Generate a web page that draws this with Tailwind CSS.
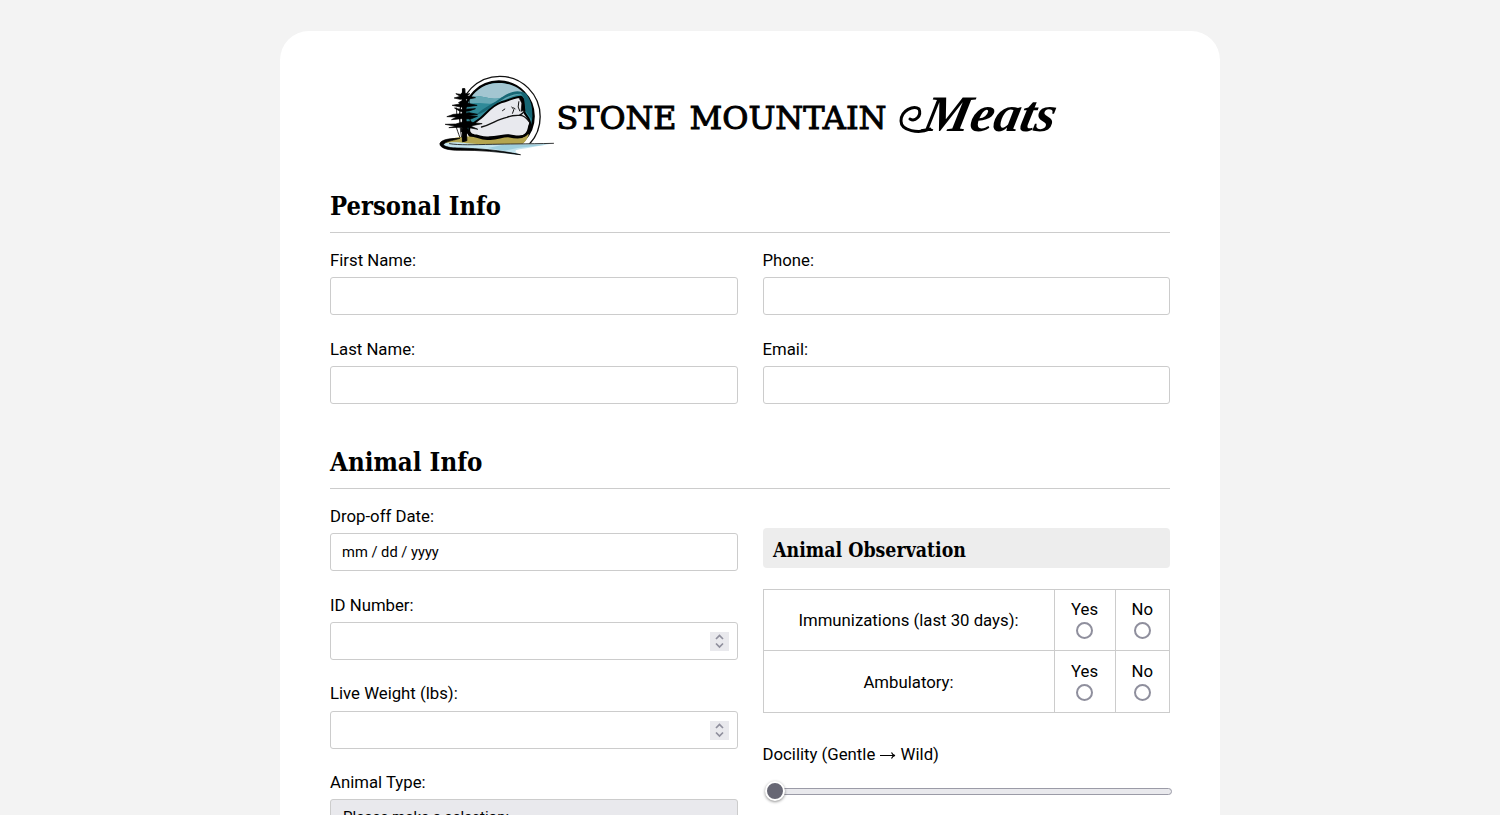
<!DOCTYPE html>
<html lang="en">
<head>
<meta charset="utf-8">
<title>Stone Mountain Meats</title>
<script src="https://cdn.jsdelivr.net/npm/@tailwindcss/browser@4"></script>
</head>
<body class="h-[815px] overflow-hidden bg-[#f3f3f3] font-['Roboto',sans-serif] text-[16.750px] leading-6 text-black">
<div class="h-[815px] overflow-hidden pt-[30.500px]">
<main class="mx-auto h-[784.500px] w-[940px] rounded-t-[29px] bg-white px-[50px] pt-[34.500px]">
  <header class="flex h-[100px] justify-center">
    <svg class="h-[100px] w-[640px] shrink-0 overflow-visible" viewBox="430 65 640 100" role="img" aria-label="Stone Mountain Meats">
      <defs><clipPath id="horizon"><path d="M0 0H400V236H0Z"/></clipPath></defs>
      <g transform="translate(429.500 65) scale(.33333)" stroke-linecap="round" stroke-linejoin="round">
        <g clip-path="url(#horizon)">
          <circle cx="211" cy="155" r="121" fill="#fff" stroke="#111" stroke-width="4"/>
          <circle cx="208" cy="154" r="104" fill="#2f8a98" stroke="#000" stroke-width="8"/>
        </g>
        <path d="M124 98C142 72 170 54 208 54C243 54 270 68 287 89C262 79 243 89 215 98C178 110 148 82 124 98Z" fill="#a3c6d1"/>
        <path d="M124 98C149 83 178 109 215 98C241 89 262 79 287 89C265 83 239 98 216 108C179 127 145 104 111 120Z" fill="#68a9b5"/>
        <path d="M140 150C185 139 220 86 274 86C287 95 283 119 290 141L308 164C311 119 301 102 290 86C263 70 238 83 217 97C191 117 166 125 140 150Z" fill="#176775"/>
        <path d="M42 239C62 215 91 216 125 214L298 208C294 222 286 234 276 238L111 240Z" fill="#b4a550"/>
        <path d="M33 238C75 225 104 236 154 238L372 235C327 244 297 249 270 253C246 257 264 264 272 270C210 264 170 255 116 253C74 251 35 255 33 238Z" fill="#c3e4ef"/>
        <path d="M218 240L350 239L264 249L225 257L175 249Z" fill="#9dcede"/>
        <path d="M60 236C90 241 131 239 188 238C233 237 288 237 372 235" fill="none" stroke="#111" stroke-width="2.500"/>
        <path d="M272 269C210 255 150 251 92 249C60 250 38 243 43 237C51 228 78 225 91 220C63 220 35 223 31 236C31 249 53 256 92 256C150 255 210 261 272 269Z" fill="#000" stroke="#000" stroke-width="2"/>
        <path d="M120 188C121 178 140 171 153 160C173 142 189 120 215 112C240 106 255 95 274 95C285 98 281 120 285 137C281 148 297 151 302 173C302 184 298 208 281 213C263 218 250 211 236 211C217 211 202 217 181 217C160 221 149 211 134 211C120 209 117 198 120 188Z" fill="#e8e9ee" stroke="#000" stroke-width="6"/>
        <path d="M156 186C188 178 202 163 232 157C247 150 260 151 269 151C276 148 279 145 284 140M269 151C286 150 293 162 299 170" fill="none" stroke="#111" stroke-width="4"/>
        <path d="M219 137L226 132M247 126L253 134L249 145M268 110L266 126L271 138M253 128L257 132" fill="none" stroke="#111" stroke-width="3"/>
        <path d="M268 97L282 101L284 136L275 139L277 115Z" fill="#000" stroke="#000" stroke-width="2"/>
        <path d="M122 211C143 211 151 223 178 221C204 223 215 212 237 213C253 217 276 219 285 211C301 203 296 187 302 177" fill="none" stroke="#000" stroke-width="7"/>
        <path d="M100 71L106 71L112 227L100 230Z" fill="#000" stroke="#000" stroke-width="3"/>
        <g fill="#000" stroke="#000" stroke-width="2">
          <path d="M102 79L93 88L79 86L92 94L74 99L91 103L118 102L138 98L113 92L121 86L109 87Z"/>
          <path d="M99 106L87 113L91 117L68 121L92 126L117 125L143 121L115 115L109 105Z"/>
          <path d="M98 134L75 129L88 137L96 140L119 138L138 131L116 132Z"/>
          <path d="M99 146L72 148L52 155L81 156L66 164L96 161L124 162L144 154L115 152L144 148L119 143Z"/>
          <path d="M99 171L79 177L47 178L78 184L58 188L93 187L119 188L145 193L123 183L158 176L131 173L121 169Z"/>
          <path d="M102 193L94 199L104 202L126 208L111 193Z"/>
        </g>
        <path d="M80 128C83 139 80 149 84 160M78 180C83 194 86 204 91 217M92 188L96 216M119 105L119 120M120 160L125 173" fill="none" stroke="#000" stroke-width="2.500"/>
      </g>
      <g font-family="'Roboto Slab','DejaVu Serif',serif" font-size="32.500" stroke="#000" stroke-width="1">
        <text x="556.500" y="129.300" textLength="120" lengthAdjust="spacingAndGlyphs">STONE</text>
        <text x="689.500" y="129.300" textLength="197" lengthAdjust="spacingAndGlyphs">MOUNTAIN</text>
      </g>
      <text transform="translate(921 130.500) skewX(-12)" font-family="'Liberation Serif',serif" font-size="51" font-weight="700" font-style="italic" textLength="132" lengthAdjust="spacingAndGlyphs">Meats</text>
      <path d="M930 129C919 134 901 131 901 121C901 110 914 105 919 109C922 116 915 122 910 119" fill="none" stroke="#000" stroke-width="3" stroke-linecap="round"/>
    </svg>
  </header>

  <section>
    <h2 class="mt-[17px] h-[51px] border-b border-[#ccc]">
      <svg class="block h-[50px] w-[180px] overflow-visible" viewBox="0 0 180 50"><text x="0" y="33" font-family="'Roboto Slab','DejaVu Serif',serif" font-weight="700" font-size="26" textLength="171" lengthAdjust="spacingAndGlyphs">Personal Info</text></svg>
    </h2>
    <div class="mt-[14.500px] grid grid-cols-2 gap-x-[25px] gap-y-[22px]">
      <label class="block h-[67px]">First Name:<input type="text" class="mt-[5.400px] block h-[38px] w-full rounded-[3px] border border-[#ccc] bg-white px-[11px]"></label>
      <label class="block">Phone:<input type="tel" class="mt-[5.400px] block h-[38px] w-full rounded-[3px] border border-[#ccc] bg-white px-[11px]"></label>
      <label class="block h-[67px]">Last Name:<input type="text" class="mt-[4.900px] block h-[38px] w-full rounded-[3px] border border-[#ccc] bg-white px-[11px]"></label>
      <label class="block">Email:<input type="email" class="mt-[4.900px] block h-[38px] w-full rounded-[3px] border border-[#ccc] bg-white px-[11px]"></label>
    </div>
  </section>

  <section>
    <h2 class="mt-[34.500px] h-[51px] border-b border-[#ccc]">
      <svg class="block h-[50px] w-[180px] overflow-visible" viewBox="0 0 180 50"><text x="0" y="33" font-family="'Roboto Slab','DejaVu Serif',serif" font-weight="700" font-size="26" textLength="152.500" lengthAdjust="spacingAndGlyphs">Animal Info</text></svg>
    </h2>
    <div class="mt-[15px] grid grid-cols-2 gap-x-[25px]">
      <div class="flex flex-col">
        <div class="h-[89px]">Drop-off Date:
          <div class="mt-[5px] flex h-[38px] items-center rounded-[3px] border border-[#ccc] px-[11px] text-[14.700px]">mm / dd / yyyy</div>
        </div>
        <div class="h-[88px]">ID Number:
          <div class="mt-[5px] flex h-[38px] items-center justify-end rounded-[3px] border border-[#ccc] pr-2">
            <svg class="h-[19px] w-[19px] bg-[#e9e9ed]" viewBox="0 0 19 19" fill="none" stroke="#8f8f9d" stroke-width="1.700"><path d="M6 7L9.500 3.500L13 7M6 11.500L9.500 15L13 11.500"/></svg>
          </div>
        </div>
        <div class="h-[89px]">Live Weight (lbs):
          <div class="mt-1.5 flex h-[38px] items-center justify-end rounded-[3px] border border-[#ccc] pr-2">
            <svg class="h-[19px] w-[19px] bg-[#e9e9ed]" viewBox="0 0 19 19" fill="none" stroke="#8f8f9d" stroke-width="1.700"><path d="M6 7L9.500 3.500L13 7M6 11.500L9.500 15L13 11.500"/></svg>
          </div>
        </div>
        <div class="h-[45px]">Animal Type:
          <div class="mt-[5px] flex h-[38px] items-center rounded-[3px] border border-[#ccc] bg-[#e9e9ed] px-3 pb-0.5 text-[15.100px]">Please make a selection:</div>
        </div>
      </div>

      <div class="pt-6">
        <h3 class="h-10 rounded-[4px] bg-[#ededed] pl-2.5">
          <svg class="block h-10 w-[210px] overflow-visible" viewBox="0 0 210 40"><text x="0" y="28.500" font-family="'Roboto Slab','DejaVu Serif',serif" font-weight="700" font-size="19.500" textLength="193" lengthAdjust="spacingAndGlyphs">Animal Observation</text></svg>
        </h3>
        <div class="mt-[21px] grid h-[124px] grid-cols-[290px_60px_1fr] grid-rows-[60px_1fr] gap-px border border-[#ccc] bg-[#ccc] text-center">
          <div class="flex items-center justify-center bg-white">Immunizations (last 30 days):</div>
          <div class="flex flex-col items-center bg-white pt-[7px]"><span>Yes</span><span class="mt-px h-[17px] w-[17px] rounded-full border-2 border-[#8f8f9d]"></span></div>
          <div class="flex flex-col items-center bg-white pt-[7px]"><span>No</span><span class="mt-px h-[17px] w-[17px] rounded-full border-2 border-[#8f8f9d]"></span></div>
          <div class="flex items-center justify-center bg-white">Ambulatory:</div>
          <div class="flex flex-col items-center bg-white pt-2"><span>Yes</span><span class="mt-px h-[17px] w-[17px] rounded-full border-2 border-[#8f8f9d]"></span></div>
          <div class="flex flex-col items-center bg-white pt-2"><span>No</span><span class="mt-px h-[17px] w-[17px] rounded-full border-2 border-[#8f8f9d]"></span></div>
        </div>
        <div class="mt-[29px] flex items-center">Docility (Gentle&nbsp;<svg class="h-6 w-[17px]" viewBox="0 0 17 24" fill="none" stroke="#000" stroke-width="1.100"><path d="M1 13.500H16M12.500 10.500Q13.500 13 16 13.500Q13.500 14 12.500 16.500"/></svg>&nbsp;Wild)</div>
        <div class="mt-[15px] -mr-[2px] ml-0.5 flex h-5 items-center">
          <div class="z-10 h-5 w-5 shrink-0 rounded-full border-2 border-white bg-[#676774] shadow-[0_1px_3px_rgba(0,0,0,0.45)]"></div>
          <div class="-ml-2 h-[7px] flex-1 rounded-full border border-[#9b9ba7] bg-[#e9e9ed]"></div>
        </div>
      </div>
    </div>
  </section>
</main>
</div>
</body>
</html>
